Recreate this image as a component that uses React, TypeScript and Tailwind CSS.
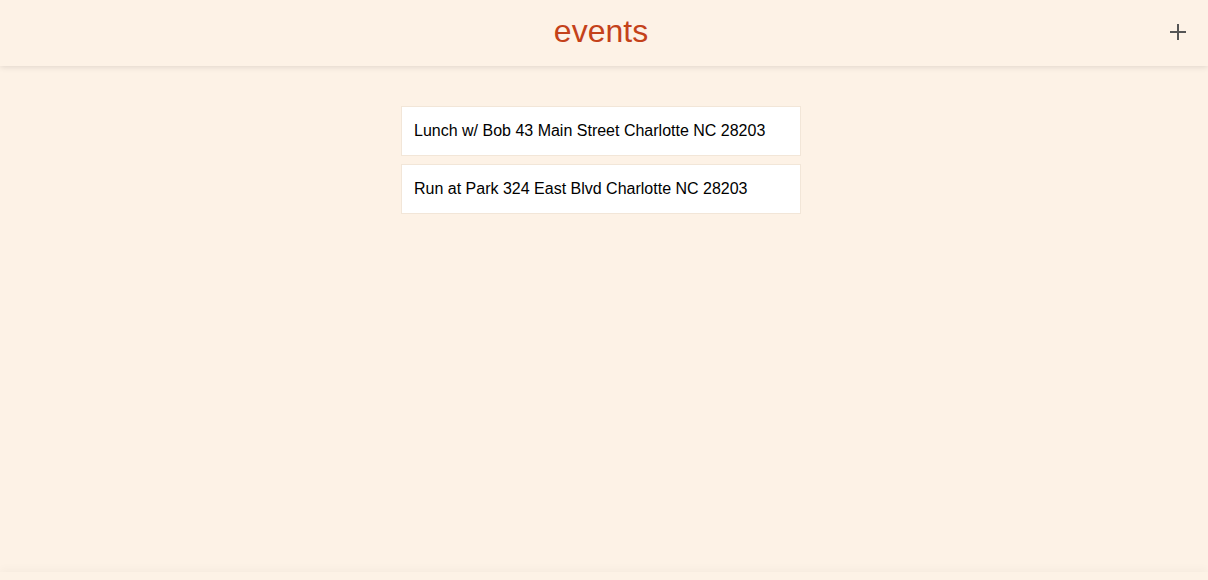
import React from "react";

const events = [
  "Lunch w/ Bob 43 Main Street Charlotte NC 28203",
  "Run at Park 324 East Blvd Charlotte NC 28203",
];

export default function App() {
  return (
    <div
      className="w-[1208px] h-[580px] bg-[#fdf2e6] flex flex-col overflow-hidden"
      style={{ fontFamily: '"Liberation Sans", Arial, sans-serif' }}
    >
      <header className="relative h-[66px] shrink-0 flex items-center justify-center pr-[6px] bg-[#fdf2e6] shadow-[0_1px_6px_rgba(0,0,0,0.12)] z-10">
        <h1 className="text-[32px] leading-none text-[#c4421a] -mt-[4px]">events</h1>
        <button className="absolute right-[21px] top-[23px] w-[18px] h-[18px] flex items-center justify-center">
          <svg width="18" height="18" viewBox="0 0 18 18">
            <path d="M9 1v16M1 9h16" stroke="#555" strokeWidth="2" />
          </svg>
        </button>
      </header>
      <main className="flex-1 flex flex-col items-center pt-[40px] pr-[6px] gap-[8px]">
        {events.map((e) => (
          <div
            key={e}
            className="w-[400px] h-[50px] bg-white border border-[#f2e6d8] flex items-center px-[12px] text-[16px] text-black"
          >
            {e}
          </div>
        ))}
      </main>
      <footer className="h-[8px] shrink-0 shadow-[0_-2px_10px_rgba(0,0,0,0.04)]" />
    </div>
  );
}
